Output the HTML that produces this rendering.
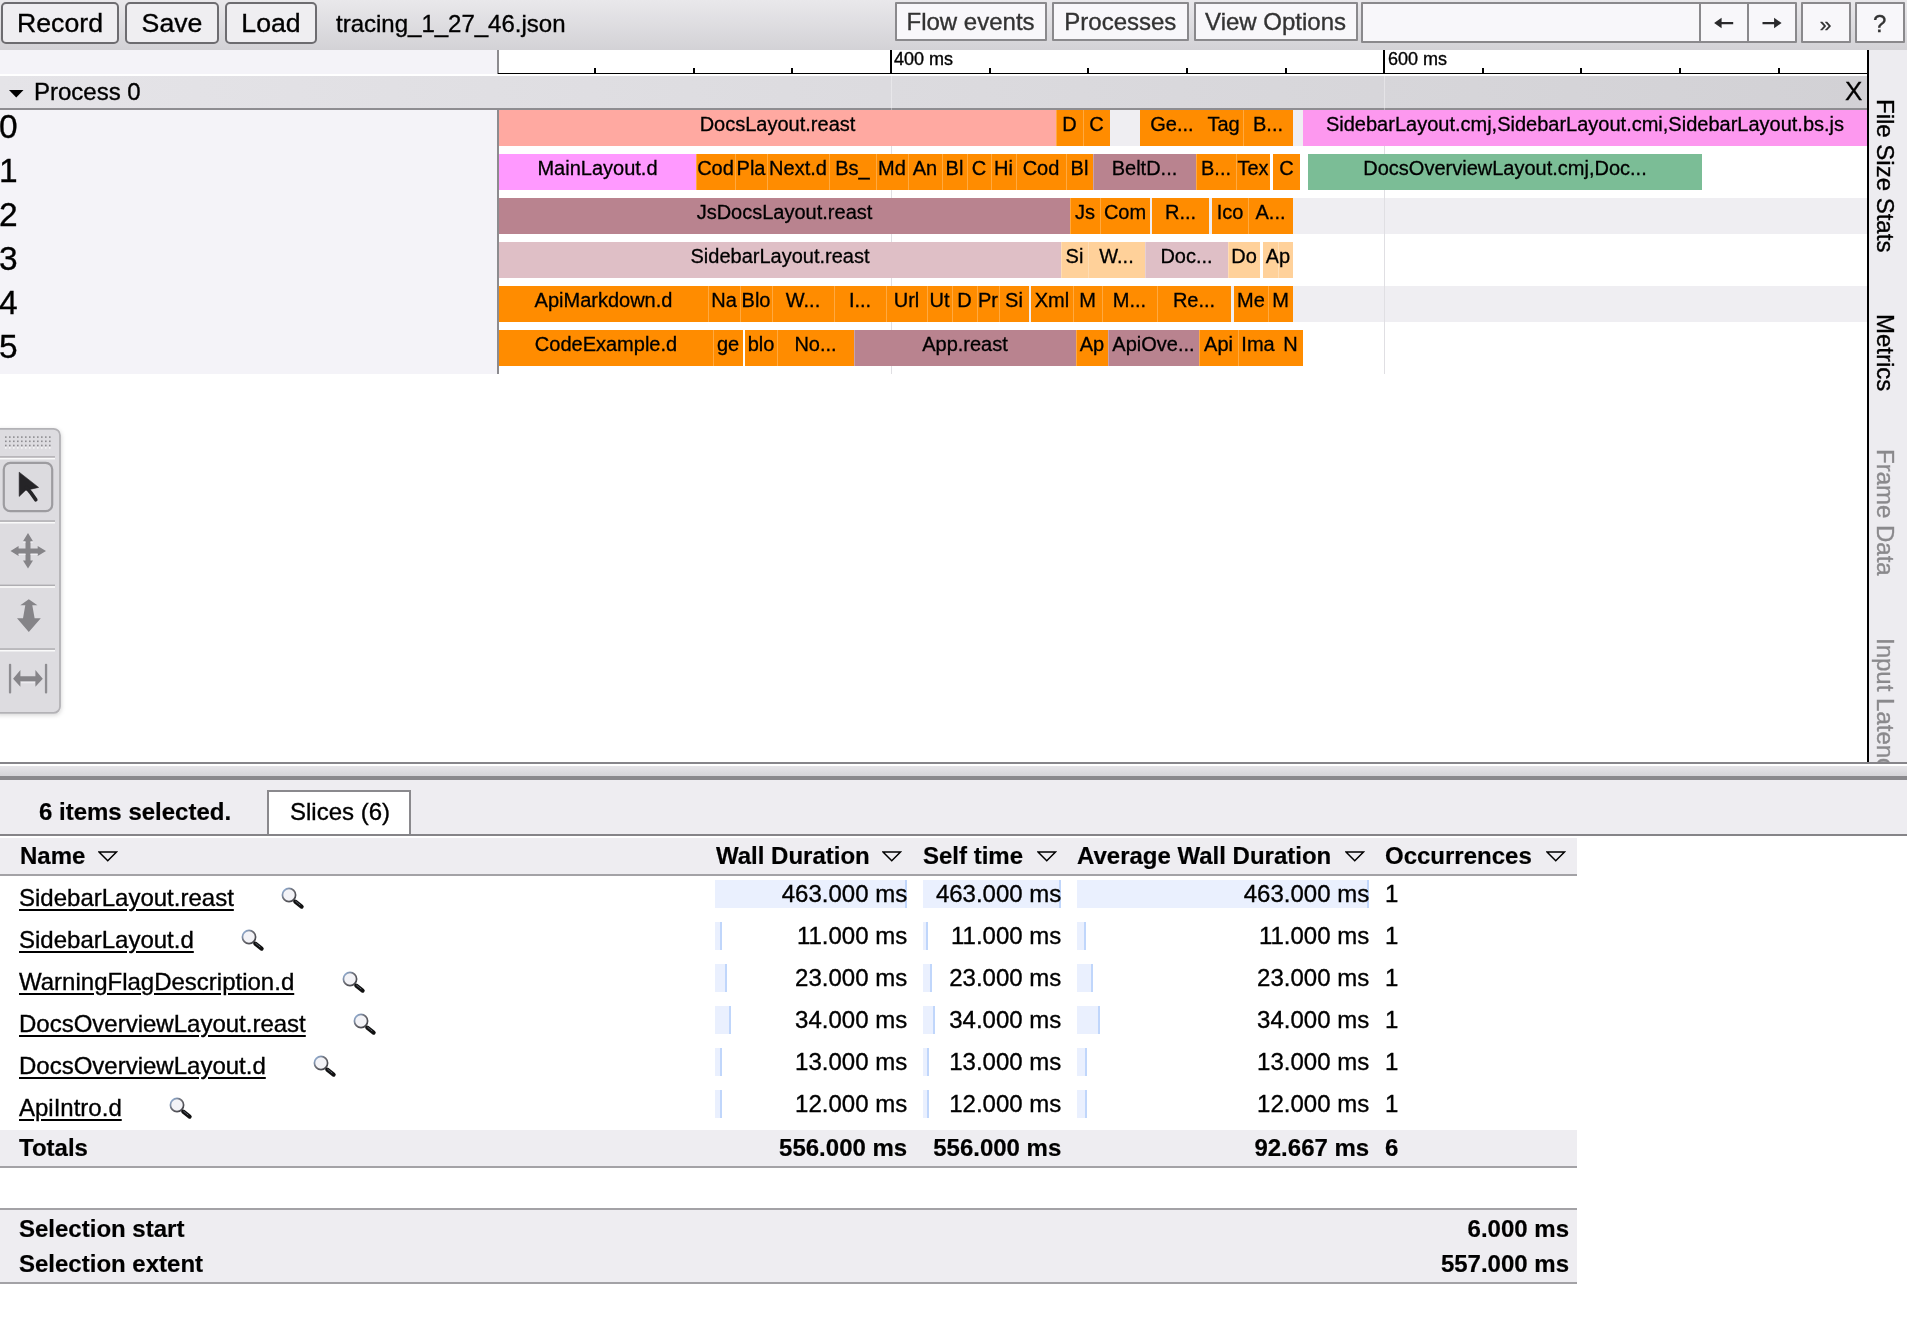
<!DOCTYPE html>
<html><head><meta charset="utf-8"><style>
html,body{margin:0;padding:0;}
body{width:1907px;height:1319px;overflow:hidden;position:relative;background:#fff;font-family:"Liberation Sans", sans-serif;color:#000;}
.a{position:absolute;box-sizing:border-box;}
.t{position:absolute;white-space:nowrap;line-height:1;will-change:transform;-webkit-text-stroke:0.35px currentColor;}
.t[style*="bold"]{-webkit-text-stroke:0.2px currentColor;}
.btn{position:absolute;box-sizing:border-box;border:2px solid #6d6c70;border-radius:5px;background:#efeef1;}
.tb{position:absolute;box-sizing:border-box;border:2px solid #8a898c;border-radius:1px;background:#f8f7fa;}
.sl{position:absolute;overflow:hidden;}
.sl span{will-change:transform;-webkit-text-stroke:0.3px #000;position:absolute;left:0;right:0;text-align:center;font-size:20px;line-height:20px;white-space:nowrap;}
</style></head><body>

<div class="a" style="left:0;top:0;width:1907px;height:50px;background:linear-gradient(#e9e8eb,#d3d2d6);"></div>
<div class="btn" style="left:1.0px;top:2px;width:118.0px;height:42px;"></div>
<div class="t" style="left:1.0px;top:6px;width:118.0px;text-align:center;font-size:26.67px;line-height:34px;">Record</div>
<div class="btn" style="left:125.0px;top:2px;width:94.0px;height:42px;"></div>
<div class="t" style="left:125.0px;top:6px;width:94.0px;text-align:center;font-size:26.67px;line-height:34px;">Save</div>
<div class="btn" style="left:225.0px;top:2px;width:92.0px;height:42px;"></div>
<div class="t" style="left:225.0px;top:6px;width:92.0px;text-align:center;font-size:26.67px;line-height:34px;">Load</div>
<div class="t" style="left:336px;top:8px;font-size:24px;line-height:32px;">tracing_1_27_46.json</div>
<div class="tb" style="left:895.4px;top:2.4px;width:152.1px;height:39.0px;"></div>
<div class="t" style="left:895.4px;top:2.4px;width:151.1px;text-align:center;font-size:24.0px;line-height:39.0px;color:#333;">Flow events</div>
<div class="tb" style="left:1051.6px;top:2.4px;width:137.7px;height:39.0px;"></div>
<div class="t" style="left:1051.6px;top:2.4px;width:136.7px;text-align:center;font-size:24.0px;line-height:39.0px;color:#333;">Processes</div>
<div class="tb" style="left:1193.5px;top:2.4px;width:164.1px;height:39.0px;"></div>
<div class="t" style="left:1193.5px;top:2.4px;width:163.1px;text-align:center;font-size:24.0px;line-height:39.0px;color:#333;">View Options</div>
<div class="tb" style="left:1361.4px;top:2.3px;width:339.4px;height:40.9px;"></div>
<div class="tb" style="left:1699.1px;top:2.3px;width:49.8px;height:40.9px;"></div>
<div class="tb" style="left:1747.0px;top:2.3px;width:49.7px;height:40.9px;"></div>
<div class="tb" style="left:1801.3px;top:2.3px;width:50.1px;height:40.9px;"></div>
<div class="tb" style="left:1855.2px;top:2.3px;width:50.3px;height:40.9px;"></div>
<svg class="a" style="left:1700px;top:0;" width="100" height="45" viewBox="1700 0 100 45"><path d="M1714.1,23 L1721.6,17.8 L1721.6,21.9 L1733.2,21.9 L1733.2,24.3 L1721.6,24.3 L1721.6,28.2 Z" fill="#2a2a2c"/><path d="M1781.6,23 L1774.1,17.8 L1774.1,21.9 L1762.5,21.9 L1762.5,24.3 L1774.1,24.3 L1774.1,28.2 Z" fill="#2a2a2c"/></svg>
<div class="t" style="left:1801.3px;top:12px;width:49.1px;text-align:center;font-size:21px;line-height:24px;color:#333;">&#187;</div>
<div class="t" style="left:1855.2px;top:4px;width:49.3px;text-align:center;font-size:24px;line-height:40px;color:#333;">?</div>
<div class="a" style="left:0;top:50px;width:498px;height:23.5px;background:#f4f3f8;"></div>
<div class="a" style="left:498px;top:50px;width:1369px;height:23.5px;background:#fff;"></div>
<div class="a" style="left:497px;top:50px;width:1.6px;height:23.5px;background:#8c8b8f;"></div>
<div class="a" style="left:498px;top:72.5px;width:1369px;height:1.6px;background:#000;"></div>
<div class="a" style="left:593.95px;top:68px;width:2px;height:5px;background:#000;"></div>
<div class="a" style="left:692.60px;top:68px;width:2px;height:5px;background:#000;"></div>
<div class="a" style="left:791.25px;top:68px;width:2px;height:5px;background:#000;"></div>
<div class="a" style="left:889.90px;top:50px;width:2px;height:23px;background:#000;"></div>
<div class="a" style="left:988.55px;top:68px;width:2px;height:5px;background:#000;"></div>
<div class="a" style="left:1087.20px;top:68px;width:2px;height:5px;background:#000;"></div>
<div class="a" style="left:1185.85px;top:68px;width:2px;height:5px;background:#000;"></div>
<div class="a" style="left:1284.50px;top:68px;width:2px;height:5px;background:#000;"></div>
<div class="a" style="left:1383.15px;top:50px;width:2px;height:23px;background:#000;"></div>
<div class="a" style="left:1481.80px;top:68px;width:2px;height:5px;background:#000;"></div>
<div class="a" style="left:1580.45px;top:68px;width:2px;height:5px;background:#000;"></div>
<div class="a" style="left:1679.10px;top:68px;width:2px;height:5px;background:#000;"></div>
<div class="a" style="left:1777.75px;top:68px;width:2px;height:5px;background:#000;"></div>
<div class="t" style="left:894px;top:50px;font-size:18px;line-height:18px;">400 ms</div>
<div class="t" style="left:1388px;top:50px;font-size:18px;line-height:18px;">600 ms</div>
<div class="a" style="left:0;top:73.5px;width:1867px;height:2.5px;background:#fff;"></div>
<div class="a" style="left:0;top:76px;width:1867px;height:34px;background:linear-gradient(to right,#e5e4e8,#d2d1d5);border-bottom:2px solid #8e8d91;"></div>
<svg class="a" style="left:9px;top:89.6px;" width="15" height="8"><polygon points="0,0 14.5,0 7.25,7.5" fill="#000"/></svg>
<div class="t" style="left:34px;top:78px;font-size:24px;line-height:28px;">Process 0</div>
<div class="t" style="left:1844.5px;top:77px;font-size:26px;line-height:28px;-webkit-text-stroke:0.3px #000;">X</div>
<div class="a" style="left:0;top:110px;width:498px;height:264px;background:#f4f3f8;"></div>
<div class="a" style="left:497px;top:110px;width:1.6px;height:264px;background:#8c8b8f;"></div>
<div class="a" style="left:498.6px;top:110px;width:1368.4px;height:36px;background:#efeef2;"></div>
<div class="t" style="left:-1px;top:110.4px;font-size:33.5px;line-height:33.5px;">0</div>
<div class="t" style="left:-1px;top:154.4px;font-size:33.5px;line-height:33.5px;">1</div>
<div class="a" style="left:498.6px;top:198px;width:1368.4px;height:36px;background:#efeef2;"></div>
<div class="t" style="left:-1px;top:198.4px;font-size:33.5px;line-height:33.5px;">2</div>
<div class="t" style="left:-1px;top:242.4px;font-size:33.5px;line-height:33.5px;">3</div>
<div class="a" style="left:498.6px;top:286px;width:1368.4px;height:36px;background:#efeef2;"></div>
<div class="t" style="left:-1px;top:286.4px;font-size:33.5px;line-height:33.5px;">4</div>
<div class="t" style="left:-1px;top:330.4px;font-size:33.5px;line-height:33.5px;">5</div>
<div class="a" style="left:891px;top:110px;width:1px;height:264px;background:#e0dfe3;"></div>
<div class="a" style="left:891px;top:76px;width:1px;height:34px;background:rgba(255,255,255,0.35);"></div>
<div class="a" style="left:1384px;top:110px;width:1px;height:264px;background:#e0dfe3;"></div>
<div class="a" style="left:1384px;top:76px;width:1px;height:34px;background:rgba(255,255,255,0.35);"></div>
<div class="sl" style="left:499.0px;top:110px;width:557.0px;height:36px;background:#ffa9a1;"><span style="top:3.9px;">DocsLayout.reast</span></div>
<div class="sl" style="left:1056.0px;top:110px;width:27.0px;height:36px;background:#ff8c00;"><span style="top:3.9px;">D</span></div>
<div class="sl" style="left:1083.0px;top:110px;width:27.0px;height:36px;background:#ff8c00;"><span style="top:3.9px;">C</span></div>
<div class="sl" style="left:1140.0px;top:110px;width:64.0px;height:36px;background:#ff8c00;"><span style="top:3.9px;">Ge...</span></div>
<div class="sl" style="left:1204.0px;top:110px;width:39.0px;height:36px;background:#ff8c00;"><span style="top:3.9px;">Tag</span></div>
<div class="sl" style="left:1243.0px;top:110px;width:50.0px;height:36px;background:#ff8c00;"><span style="top:3.9px;">B...</span></div>
<div class="sl" style="left:1303.0px;top:110px;width:564.0px;height:36px;background:#fd98ef;"><span style="top:3.9px;">SidebarLayout.cmj,SidebarLayout.cmi,SidebarLayout.bs.js</span></div>
<div class="a" style="left:1056px;top:110px;width:1px;height:36px;background:rgba(255,255,255,0.25);"></div>
<div class="a" style="left:1083px;top:110px;width:1px;height:36px;background:rgba(255,255,255,0.25);"></div>
<div class="a" style="left:1243px;top:110px;width:1px;height:36px;background:rgba(255,255,255,0.25);"></div>
<div class="sl" style="left:499.0px;top:154px;width:197.0px;height:36px;background:#ff99ff;"><span style="top:3.9px;">MainLayout.d</span></div>
<div class="sl" style="left:696.0px;top:154px;width:39.0px;height:36px;background:#ff8c00;"><span style="top:3.9px;">Cod</span></div>
<div class="sl" style="left:735.0px;top:154px;width:32.0px;height:36px;background:#ff8c00;"><span style="top:3.9px;">Pla</span></div>
<div class="sl" style="left:767.0px;top:154px;width:62.0px;height:36px;background:#ff8c00;"><span style="top:3.9px;">Next.d</span></div>
<div class="sl" style="left:829.0px;top:154px;width:47.0px;height:36px;background:#ff8c00;"><span style="top:3.9px;">Bs_</span></div>
<div class="sl" style="left:876.0px;top:154px;width:32.0px;height:36px;background:#ff8c00;"><span style="top:3.9px;">Md</span></div>
<div class="sl" style="left:908.0px;top:154px;width:34.0px;height:36px;background:#ff8c00;"><span style="top:3.9px;">An</span></div>
<div class="sl" style="left:942.0px;top:154px;width:25.0px;height:36px;background:#ff8c00;"><span style="top:3.9px;">Bl</span></div>
<div class="sl" style="left:967.0px;top:154px;width:24.0px;height:36px;background:#ff8c00;"><span style="top:3.9px;">C</span></div>
<div class="sl" style="left:991.0px;top:154px;width:25.0px;height:36px;background:#ff8c00;"><span style="top:3.9px;">Hi</span></div>
<div class="sl" style="left:1016.0px;top:154px;width:50.0px;height:36px;background:#ff8c00;"><span style="top:3.9px;">Cod</span></div>
<div class="sl" style="left:1066.0px;top:154px;width:27.0px;height:36px;background:#ff8c00;"><span style="top:3.9px;">Bl</span></div>
<div class="sl" style="left:1093.0px;top:154px;width:103.0px;height:36px;background:#b9838f;"><span style="top:3.9px;">BeltD...</span></div>
<div class="sl" style="left:1196.0px;top:154px;width:40.0px;height:36px;background:#ff8c00;"><span style="top:3.9px;">B...</span></div>
<div class="sl" style="left:1236.0px;top:154px;width:34.0px;height:36px;background:#ff8c00;"><span style="top:3.9px;">Tex</span></div>
<div class="sl" style="left:1273.0px;top:154px;width:27.0px;height:36px;background:#ff8c00;"><span style="top:3.9px;">C</span></div>
<div class="sl" style="left:1308.0px;top:154px;width:394.0px;height:36px;background:#7bbd96;"><span style="top:3.9px;">DocsOverviewLayout.cmj,Doc...</span></div>
<div class="a" style="left:696px;top:154px;width:1px;height:36px;background:rgba(255,255,255,0.25);"></div>
<div class="a" style="left:735px;top:154px;width:1px;height:36px;background:rgba(255,255,255,0.25);"></div>
<div class="a" style="left:767px;top:154px;width:1px;height:36px;background:rgba(255,255,255,0.25);"></div>
<div class="a" style="left:829px;top:154px;width:1px;height:36px;background:rgba(255,255,255,0.25);"></div>
<div class="a" style="left:876px;top:154px;width:1px;height:36px;background:rgba(255,255,255,0.25);"></div>
<div class="a" style="left:908px;top:154px;width:1px;height:36px;background:rgba(255,255,255,0.25);"></div>
<div class="a" style="left:942px;top:154px;width:1px;height:36px;background:rgba(255,255,255,0.25);"></div>
<div class="a" style="left:967px;top:154px;width:1px;height:36px;background:rgba(255,255,255,0.25);"></div>
<div class="a" style="left:991px;top:154px;width:1px;height:36px;background:rgba(255,255,255,0.25);"></div>
<div class="a" style="left:1016px;top:154px;width:1px;height:36px;background:rgba(255,255,255,0.25);"></div>
<div class="a" style="left:1066px;top:154px;width:1px;height:36px;background:rgba(255,255,255,0.25);"></div>
<div class="a" style="left:1093px;top:154px;width:1px;height:36px;background:rgba(255,255,255,0.25);"></div>
<div class="a" style="left:1196px;top:154px;width:1px;height:36px;background:rgba(255,255,255,0.25);"></div>
<div class="a" style="left:1236px;top:154px;width:1px;height:36px;background:rgba(255,255,255,0.25);"></div>
<div class="sl" style="left:499.0px;top:198px;width:571.0px;height:36px;background:#b9838f;"><span style="top:3.9px;">JsDocsLayout.reast</span></div>
<div class="sl" style="left:1070.0px;top:198px;width:30.0px;height:36px;background:#ff8c00;"><span style="top:3.9px;">Js</span></div>
<div class="sl" style="left:1100.0px;top:198px;width:50.0px;height:36px;background:#ff8c00;"><span style="top:3.9px;">Com</span></div>
<div class="sl" style="left:1152.0px;top:198px;width:57.0px;height:36px;background:#ff8c00;"><span style="top:3.9px;">R...</span></div>
<div class="sl" style="left:1212.0px;top:198px;width:36.0px;height:36px;background:#ff8c00;"><span style="top:3.9px;">Ico</span></div>
<div class="sl" style="left:1248.0px;top:198px;width:45.0px;height:36px;background:#ff8c00;"><span style="top:3.9px;">A...</span></div>
<div class="a" style="left:1070px;top:198px;width:1px;height:36px;background:rgba(255,255,255,0.25);"></div>
<div class="a" style="left:1100px;top:198px;width:1px;height:36px;background:rgba(255,255,255,0.25);"></div>
<div class="a" style="left:1248px;top:198px;width:1px;height:36px;background:rgba(255,255,255,0.25);"></div>
<div class="sl" style="left:499.0px;top:242px;width:562.0px;height:36px;background:#dfbfc6;"><span style="top:3.9px;">SidebarLayout.reast</span></div>
<div class="sl" style="left:1061.0px;top:242px;width:27.0px;height:36px;background:#ffd19a;"><span style="top:3.9px;">Si</span></div>
<div class="sl" style="left:1088.0px;top:242px;width:57.0px;height:36px;background:#ffd19a;"><span style="top:3.9px;">W...</span></div>
<div class="sl" style="left:1145.0px;top:242px;width:83.0px;height:36px;background:#dfbfc6;"><span style="top:3.9px;">Doc...</span></div>
<div class="sl" style="left:1228.0px;top:242px;width:32.0px;height:36px;background:#ffd19a;"><span style="top:3.9px;">Do</span></div>
<div class="sl" style="left:1263.0px;top:242px;width:30.0px;height:36px;background:#ffd19a;"><span style="top:3.9px;">Ap</span></div>
<div class="a" style="left:1061px;top:242px;width:1px;height:36px;background:rgba(255,255,255,0.25);"></div>
<div class="a" style="left:1088px;top:242px;width:1px;height:36px;background:rgba(255,255,255,0.25);"></div>
<div class="a" style="left:1145px;top:242px;width:1px;height:36px;background:rgba(255,255,255,0.25);"></div>
<div class="a" style="left:1228px;top:242px;width:1px;height:36px;background:rgba(255,255,255,0.25);"></div>
<div class="sl" style="left:499.0px;top:286px;width:209.0px;height:36px;background:#ff8c00;"><span style="top:3.9px;">ApiMarkdown.d</span></div>
<div class="sl" style="left:708.0px;top:286px;width:32.0px;height:36px;background:#ff8c00;"><span style="top:3.9px;">Na</span></div>
<div class="sl" style="left:740.0px;top:286px;width:32.0px;height:36px;background:#ff8c00;"><span style="top:3.9px;">Blo</span></div>
<div class="sl" style="left:772.0px;top:286px;width:62.0px;height:36px;background:#ff8c00;"><span style="top:3.9px;">W...</span></div>
<div class="sl" style="left:834.0px;top:286px;width:52.0px;height:36px;background:#ff8c00;"><span style="top:3.9px;">I...</span></div>
<div class="sl" style="left:886.0px;top:286px;width:41.0px;height:36px;background:#ff8c00;"><span style="top:3.9px;">Url</span></div>
<div class="sl" style="left:927.0px;top:286px;width:25.0px;height:36px;background:#ff8c00;"><span style="top:3.9px;">Ut</span></div>
<div class="sl" style="left:952.0px;top:286px;width:25.0px;height:36px;background:#ff8c00;"><span style="top:3.9px;">D</span></div>
<div class="sl" style="left:977.0px;top:286px;width:22.0px;height:36px;background:#ff8c00;"><span style="top:3.9px;">Pr</span></div>
<div class="sl" style="left:999.0px;top:286px;width:30.0px;height:36px;background:#ff8c00;"><span style="top:3.9px;">Si</span></div>
<div class="sl" style="left:1031.0px;top:286px;width:42.0px;height:36px;background:#ff8c00;"><span style="top:3.9px;">Xml</span></div>
<div class="sl" style="left:1073.0px;top:286px;width:29.0px;height:36px;background:#ff8c00;"><span style="top:3.9px;">M</span></div>
<div class="sl" style="left:1102.0px;top:286px;width:55.0px;height:36px;background:#ff8c00;"><span style="top:3.9px;">M...</span></div>
<div class="sl" style="left:1157.0px;top:286px;width:74.0px;height:36px;background:#ff8c00;"><span style="top:3.9px;">Re...</span></div>
<div class="sl" style="left:1234.0px;top:286px;width:34.0px;height:36px;background:#ff8c00;"><span style="top:3.9px;">Me</span></div>
<div class="sl" style="left:1268.0px;top:286px;width:25.0px;height:36px;background:#ff8c00;"><span style="top:3.9px;">M</span></div>
<div class="a" style="left:708px;top:286px;width:1px;height:36px;background:rgba(255,255,255,0.25);"></div>
<div class="a" style="left:740px;top:286px;width:1px;height:36px;background:rgba(255,255,255,0.25);"></div>
<div class="a" style="left:772px;top:286px;width:1px;height:36px;background:rgba(255,255,255,0.25);"></div>
<div class="a" style="left:834px;top:286px;width:1px;height:36px;background:rgba(255,255,255,0.25);"></div>
<div class="a" style="left:886px;top:286px;width:1px;height:36px;background:rgba(255,255,255,0.25);"></div>
<div class="a" style="left:927px;top:286px;width:1px;height:36px;background:rgba(255,255,255,0.25);"></div>
<div class="a" style="left:952px;top:286px;width:1px;height:36px;background:rgba(255,255,255,0.25);"></div>
<div class="a" style="left:977px;top:286px;width:1px;height:36px;background:rgba(255,255,255,0.25);"></div>
<div class="a" style="left:999px;top:286px;width:1px;height:36px;background:rgba(255,255,255,0.25);"></div>
<div class="a" style="left:1073px;top:286px;width:1px;height:36px;background:rgba(255,255,255,0.25);"></div>
<div class="a" style="left:1102px;top:286px;width:1px;height:36px;background:rgba(255,255,255,0.25);"></div>
<div class="a" style="left:1157px;top:286px;width:1px;height:36px;background:rgba(255,255,255,0.25);"></div>
<div class="a" style="left:1268px;top:286px;width:1px;height:36px;background:rgba(255,255,255,0.25);"></div>
<div class="sl" style="left:499.0px;top:330px;width:214.0px;height:36px;background:#ff8c00;"><span style="top:3.9px;">CodeExample.d</span></div>
<div class="sl" style="left:713.0px;top:330px;width:30.0px;height:36px;background:#ff8c00;"><span style="top:3.9px;">ge</span></div>
<div class="sl" style="left:745.0px;top:330px;width:32.0px;height:36px;background:#ff8c00;"><span style="top:3.9px;">blo</span></div>
<div class="sl" style="left:777.0px;top:330px;width:77.0px;height:36px;background:#ff8c00;"><span style="top:3.9px;">No...</span></div>
<div class="sl" style="left:854.0px;top:330px;width:222.0px;height:36px;background:#b9838f;"><span style="top:3.9px;">App.reast</span></div>
<div class="sl" style="left:1076.0px;top:330px;width:32.0px;height:36px;background:#ff8c00;"><span style="top:3.9px;">Ap</span></div>
<div class="sl" style="left:1108.0px;top:330px;width:91.0px;height:36px;background:#b9838f;"><span style="top:3.9px;">ApiOve...</span></div>
<div class="sl" style="left:1199.0px;top:330px;width:39.0px;height:36px;background:#ff8c00;"><span style="top:3.9px;">Api</span></div>
<div class="sl" style="left:1238.0px;top:330px;width:40.0px;height:36px;background:#ff8c00;"><span style="top:3.9px;">Ima</span></div>
<div class="sl" style="left:1278.0px;top:330px;width:25.0px;height:36px;background:#ff8c00;"><span style="top:3.9px;">N</span></div>
<div class="a" style="left:713px;top:330px;width:1px;height:36px;background:rgba(255,255,255,0.25);"></div>
<div class="a" style="left:777px;top:330px;width:1px;height:36px;background:rgba(255,255,255,0.25);"></div>
<div class="a" style="left:854px;top:330px;width:1px;height:36px;background:rgba(255,255,255,0.25);"></div>
<div class="a" style="left:1076px;top:330px;width:1px;height:36px;background:rgba(255,255,255,0.25);"></div>
<div class="a" style="left:1108px;top:330px;width:1px;height:36px;background:rgba(255,255,255,0.25);"></div>
<div class="a" style="left:1199px;top:330px;width:1px;height:36px;background:rgba(255,255,255,0.25);"></div>
<div class="a" style="left:1238px;top:330px;width:1px;height:36px;background:rgba(255,255,255,0.25);"></div>
<div class="a" style="left:1867px;top:50px;width:1.8px;height:712px;background:#000;"></div>
<div class="a" style="left:1278px;top:242px;width:1px;height:36px;background:rgba(255,255,255,0.3);"></div>
<div class="a" style="left:1868.8px;top:50px;width:38.2px;height:712px;background:#edecf0;"></div>
<div class="t" style="left:1872px;top:99px;font-size:24px;line-height:26px;writing-mode:vertical-rl;color:#000;">File Size Stats</div>
<div class="t" style="left:1872px;top:314px;font-size:24px;line-height:26px;writing-mode:vertical-rl;color:#000;">Metrics</div>
<div class="t" style="left:1872px;top:449px;font-size:24px;line-height:26px;writing-mode:vertical-rl;color:#8a898c;">Frame Data</div>
<div class="t" style="left:1872px;top:638px;font-size:24px;line-height:26px;writing-mode:vertical-rl;color:#8a898c;">Input Latency</div>
<svg class="a" style="left:0;top:420px;" width="72" height="310" viewBox="0 420 72 310"><defs><filter id="psh" x="-20%" y="-20%" width="140%" height="140%"><feDropShadow dx="0.5" dy="1.5" stdDeviation="2.2" flood-color="#000" flood-opacity="0.16"/></filter></defs><rect x="-8" y="428.8" width="68" height="284.1" rx="6.5" ry="6.5" fill="#dddce0" stroke="#b3b2b6" stroke-width="1.8" filter="url(#psh)"/><rect x="5.0" y="436.3" width="1.6" height="1.6" fill="#8e8d91"/><rect x="9.0" y="436.3" width="1.6" height="1.6" fill="#8e8d91"/><rect x="13.0" y="436.3" width="1.6" height="1.6" fill="#8e8d91"/><rect x="17.0" y="436.3" width="1.6" height="1.6" fill="#8e8d91"/><rect x="21.0" y="436.3" width="1.6" height="1.6" fill="#8e8d91"/><rect x="25.0" y="436.3" width="1.6" height="1.6" fill="#8e8d91"/><rect x="29.0" y="436.3" width="1.6" height="1.6" fill="#8e8d91"/><rect x="33.0" y="436.3" width="1.6" height="1.6" fill="#8e8d91"/><rect x="37.0" y="436.3" width="1.6" height="1.6" fill="#8e8d91"/><rect x="41.0" y="436.3" width="1.6" height="1.6" fill="#8e8d91"/><rect x="45.0" y="436.3" width="1.6" height="1.6" fill="#8e8d91"/><rect x="49.0" y="436.3" width="1.6" height="1.6" fill="#8e8d91"/><rect x="5.0" y="440.5" width="1.6" height="1.6" fill="#8e8d91"/><rect x="9.0" y="440.5" width="1.6" height="1.6" fill="#8e8d91"/><rect x="13.0" y="440.5" width="1.6" height="1.6" fill="#8e8d91"/><rect x="17.0" y="440.5" width="1.6" height="1.6" fill="#8e8d91"/><rect x="21.0" y="440.5" width="1.6" height="1.6" fill="#8e8d91"/><rect x="25.0" y="440.5" width="1.6" height="1.6" fill="#8e8d91"/><rect x="29.0" y="440.5" width="1.6" height="1.6" fill="#8e8d91"/><rect x="33.0" y="440.5" width="1.6" height="1.6" fill="#8e8d91"/><rect x="37.0" y="440.5" width="1.6" height="1.6" fill="#8e8d91"/><rect x="41.0" y="440.5" width="1.6" height="1.6" fill="#8e8d91"/><rect x="45.0" y="440.5" width="1.6" height="1.6" fill="#8e8d91"/><rect x="49.0" y="440.5" width="1.6" height="1.6" fill="#8e8d91"/><rect x="5.0" y="444.7" width="1.6" height="1.6" fill="#8e8d91"/><rect x="9.0" y="444.7" width="1.6" height="1.6" fill="#8e8d91"/><rect x="13.0" y="444.7" width="1.6" height="1.6" fill="#8e8d91"/><rect x="17.0" y="444.7" width="1.6" height="1.6" fill="#8e8d91"/><rect x="21.0" y="444.7" width="1.6" height="1.6" fill="#8e8d91"/><rect x="25.0" y="444.7" width="1.6" height="1.6" fill="#8e8d91"/><rect x="29.0" y="444.7" width="1.6" height="1.6" fill="#8e8d91"/><rect x="33.0" y="444.7" width="1.6" height="1.6" fill="#8e8d91"/><rect x="37.0" y="444.7" width="1.6" height="1.6" fill="#8e8d91"/><rect x="41.0" y="444.7" width="1.6" height="1.6" fill="#8e8d91"/><rect x="45.0" y="444.7" width="1.6" height="1.6" fill="#8e8d91"/><rect x="49.0" y="444.7" width="1.6" height="1.6" fill="#8e8d91"/><rect x="5.0" y="447.3" width="1.6" height="1.2" fill="#fff"/><rect x="9.0" y="447.3" width="1.6" height="1.2" fill="#fff"/><rect x="13.0" y="447.3" width="1.6" height="1.2" fill="#fff"/><rect x="17.0" y="447.3" width="1.6" height="1.2" fill="#fff"/><rect x="21.0" y="447.3" width="1.6" height="1.2" fill="#fff"/><rect x="25.0" y="447.3" width="1.6" height="1.2" fill="#fff"/><rect x="29.0" y="447.3" width="1.6" height="1.2" fill="#fff"/><rect x="33.0" y="447.3" width="1.6" height="1.2" fill="#fff"/><rect x="37.0" y="447.3" width="1.6" height="1.2" fill="#fff"/><rect x="41.0" y="447.3" width="1.6" height="1.2" fill="#fff"/><rect x="45.0" y="447.3" width="1.6" height="1.2" fill="#fff"/><rect x="49.0" y="447.3" width="1.6" height="1.2" fill="#fff"/><rect x="0" y="456.2" width="55" height="1.6" fill="#aeadb1"/><rect x="0" y="457.8" width="55" height="1.6" fill="#fafafa"/><rect x="0" y="520.3" width="55" height="1.6" fill="#aeadb1"/><rect x="0" y="521.9" width="55" height="1.6" fill="#fafafa"/><rect x="0" y="584.6" width="55" height="1.6" fill="#aeadb1"/><rect x="0" y="586.2" width="55" height="1.6" fill="#fafafa"/><rect x="0" y="648.3" width="55" height="1.6" fill="#aeadb1"/><rect x="0" y="649.9" width="55" height="1.6" fill="#fafafa"/><rect x="3.8" y="462.8" width="48.4" height="48.4" rx="6.5" ry="6.5" fill="#dcdbdf" stroke="#9d9ca0" stroke-width="2.2"/><path d="M19.2,472.2 L19.2,496.4 L25.4,490.4 L38.6,487.4 Z" fill="#252427" stroke="#252427" stroke-width="0.6" stroke-linejoin="round"/><path d="M26.5,487.5 Q31.5,493 35.8,499.8" stroke="#252427" stroke-width="3.6" stroke-linecap="round" fill="none"/><path d="M28,533 L33,541.3 L30.5,541.3 L30.5,548.5 L37.7,548.5 L37.7,546 L46,551 L37.7,556 L37.7,553.5 L30.5,553.5 L30.5,560.4 L33,560.4 L28,568.5 L23,560.4 L25.5,560.4 L25.5,553.5 L18.6,553.5 L18.6,556 L10.5,551 L18.6,546 L18.6,548.5 L25.5,548.5 L25.5,541.3 L23,541.3 Z" fill="#858488"/><path d="M30.5,554.4 L37.7,554.4 M18.6,554.4 L25.5,554.4 M25.5,542.2 L23,542.2 M30.5,542.2 L33,542.2" stroke="#f0eff3" stroke-width="1" fill="none"/><path d="M28.8,599.2 L37.4,605.2 L32.3,605.2 L34.6,618.2 L40.8,618.2 L28.8,632 L17,618.2 L23,618.2 L25.3,605.2 L20.3,605.2 Z" fill="#858488"/><rect x="8.9" y="663.8" width="2.3" height="29.7" rx="1" fill="#8e8d91"/><rect x="44.9" y="663.8" width="2.3" height="29.7" rx="1" fill="#8e8d91"/><path d="M13.1,678.8 L20.4,670 L20.4,676.2 L35.4,676.2 L35.4,670 L42.8,678.8 L35.4,686.8 L35.4,681.3 L20.4,681.3 L20.4,686.8 Z" fill="#858488"/><rect x="21" y="682.2" width="14" height="1" fill="#f0eff3"/></svg>
<div class="a" style="left:0;top:762px;width:1907px;height:18px;background:linear-gradient(#e9e8ec,#d5d4d8);border-top:2px solid #86858a;border-bottom:4px solid #8a898d;box-shadow:inset 0 2px 0 #fff;"></div>
<div class="a" style="left:0;top:779.5px;width:1907px;height:54.5px;background:#eeedf1;"></div>
<div class="t" style="left:39px;top:798px;font-size:24px;line-height:28px;font-weight:bold;">6 items selected.</div>
<div class="a" style="left:267px;top:790px;width:144px;height:44px;background:#fff;border:2px solid #8a898d;border-bottom:none;"></div>
<div class="t" style="left:289.5px;top:797.5px;font-size:24px;line-height:28px;">Slices (6)</div>
<div class="a" style="left:0;top:834px;width:1907px;height:2px;background:#858488;"></div>
<div class="a" style="left:0;top:838px;width:1577px;height:38px;background:#eeedf1;border-bottom:2px solid #a3a2a6;"></div>
<div class="t" style="left:19.5px;top:842px;font-size:24px;line-height:28px;font-weight:bold;">Name</div>
<svg class="a" style="left:98.0px;top:850.5px;" width="20" height="11"><polygon points="1,1 18.5,1 9.75,9.8" fill="none" stroke="#000" stroke-width="1.5"/></svg>
<div class="t" style="left:715.5px;top:842px;font-size:24px;line-height:28px;font-weight:bold;">Wall Duration</div>
<svg class="a" style="left:882.4px;top:850.5px;" width="20" height="11"><polygon points="1,1 18.5,1 9.75,9.8" fill="none" stroke="#000" stroke-width="1.5"/></svg>
<div class="t" style="left:923.0px;top:842px;font-size:24px;line-height:28px;font-weight:bold;">Self time</div>
<svg class="a" style="left:1037.1px;top:850.5px;" width="20" height="11"><polygon points="1,1 18.5,1 9.75,9.8" fill="none" stroke="#000" stroke-width="1.5"/></svg>
<div class="t" style="left:1077.0px;top:842px;font-size:24px;line-height:28px;font-weight:bold;">Average Wall Duration</div>
<svg class="a" style="left:1345.1px;top:850.5px;" width="20" height="11"><polygon points="1,1 18.5,1 9.75,9.8" fill="none" stroke="#000" stroke-width="1.5"/></svg>
<div class="t" style="left:1385.0px;top:842px;font-size:24px;line-height:28px;font-weight:bold;">Occurrences</div>
<svg class="a" style="left:1545.6px;top:850.5px;" width="20" height="11"><polygon points="1,1 18.5,1 9.75,9.8" fill="none" stroke="#000" stroke-width="1.5"/></svg>
<div class="t" style="left:19px;top:884px;font-size:24px;line-height:28px;"><span style="text-decoration:underline;text-underline-offset:3px;">SidebarLayout.reast</span><svg style="position:relative;top:-0.5px;margin-left:46.4px;vertical-align:middle;" width="26" height="26" viewBox="0 0 26 26"><defs><linearGradient id="lg0" x1="0" y1="0" x2="1" y2="1"><stop offset="0" stop-color="#9cc0ee"/><stop offset="0.45" stop-color="#6a6a70"/><stop offset="1" stop-color="#3a3a40"/></linearGradient></defs><circle cx="9" cy="9" r="6.6" fill="#f3f3f7" stroke="url(#lg0)" stroke-width="1.7"/><line x1="15.3" y1="15.6" x2="21.6" y2="20.6" stroke="#111" stroke-width="4.2" stroke-linecap="round"/><line x1="15.8" y1="15.4" x2="20.6" y2="19.3" stroke="#6a7080" stroke-width="1" stroke-linecap="round" stroke-dasharray="1 1.2"/></svg></div>
<div class="a" style="left:715.2px;top:880px;width:191.7px;height:28px;background:#eaf0fe;border-right:2px solid #c0d6fb;"></div>
<div class="t" style="left:715.2px;top:880px;width:192.2px;text-align:right;font-size:24px;line-height:28px;">463.000 ms</div>
<div class="a" style="left:923.0px;top:880px;width:137.8px;height:28px;background:#eaf0fe;border-right:2px solid #c0d6fb;"></div>
<div class="t" style="left:923.0px;top:880px;width:138.3px;text-align:right;font-size:24px;line-height:28px;">463.000 ms</div>
<div class="a" style="left:1077.0px;top:880px;width:291.7px;height:28px;background:#eaf0fe;border-right:2px solid #c0d6fb;"></div>
<div class="t" style="left:1077.0px;top:880px;width:292.2px;text-align:right;font-size:24px;line-height:28px;">463.000 ms</div>
<div class="t" style="left:1385px;top:880px;font-size:24px;line-height:28px;">1</div>
<div class="t" style="left:19px;top:926px;font-size:24px;line-height:28px;"><span style="text-decoration:underline;text-underline-offset:3px;">SidebarLayout.d</span><svg style="position:relative;top:-0.5px;margin-left:46.4px;vertical-align:middle;" width="26" height="26" viewBox="0 0 26 26"><defs><linearGradient id="lg1" x1="0" y1="0" x2="1" y2="1"><stop offset="0" stop-color="#9cc0ee"/><stop offset="0.45" stop-color="#6a6a70"/><stop offset="1" stop-color="#3a3a40"/></linearGradient></defs><circle cx="9" cy="9" r="6.6" fill="#f3f3f7" stroke="url(#lg1)" stroke-width="1.7"/><line x1="15.3" y1="15.6" x2="21.6" y2="20.6" stroke="#111" stroke-width="4.2" stroke-linecap="round"/><line x1="15.8" y1="15.4" x2="20.6" y2="19.3" stroke="#6a7080" stroke-width="1" stroke-linecap="round" stroke-dasharray="1 1.2"/></svg></div>
<div class="a" style="left:715.2px;top:922px;width:6.5px;height:28px;background:#eaf0fe;border-right:2px solid #c0d6fb;"></div>
<div class="t" style="left:715.2px;top:922px;width:192.2px;text-align:right;font-size:24px;line-height:28px;">11.000 ms</div>
<div class="a" style="left:923.0px;top:922px;width:5.2px;height:28px;background:#eaf0fe;border-right:2px solid #c0d6fb;"></div>
<div class="t" style="left:923.0px;top:922px;width:138.3px;text-align:right;font-size:24px;line-height:28px;">11.000 ms</div>
<div class="a" style="left:1077.0px;top:922px;width:8.9px;height:28px;background:#eaf0fe;border-right:2px solid #c0d6fb;"></div>
<div class="t" style="left:1077.0px;top:922px;width:292.2px;text-align:right;font-size:24px;line-height:28px;">11.000 ms</div>
<div class="t" style="left:1385px;top:922px;font-size:24px;line-height:28px;">1</div>
<div class="t" style="left:19px;top:968px;font-size:24px;line-height:28px;"><span style="text-decoration:underline;text-underline-offset:3px;">WarningFlagDescription.d</span><svg style="position:relative;top:-0.5px;margin-left:46.4px;vertical-align:middle;" width="26" height="26" viewBox="0 0 26 26"><defs><linearGradient id="lg2" x1="0" y1="0" x2="1" y2="1"><stop offset="0" stop-color="#9cc0ee"/><stop offset="0.45" stop-color="#6a6a70"/><stop offset="1" stop-color="#3a3a40"/></linearGradient></defs><circle cx="9" cy="9" r="6.6" fill="#f3f3f7" stroke="url(#lg2)" stroke-width="1.7"/><line x1="15.3" y1="15.6" x2="21.6" y2="20.6" stroke="#111" stroke-width="4.2" stroke-linecap="round"/><line x1="15.8" y1="15.4" x2="20.6" y2="19.3" stroke="#6a7080" stroke-width="1" stroke-linecap="round" stroke-dasharray="1 1.2"/></svg></div>
<div class="a" style="left:715.2px;top:964px;width:11.4px;height:28px;background:#eaf0fe;border-right:2px solid #c0d6fb;"></div>
<div class="t" style="left:715.2px;top:964px;width:192.2px;text-align:right;font-size:24px;line-height:28px;">23.000 ms</div>
<div class="a" style="left:923.0px;top:964px;width:8.7px;height:28px;background:#eaf0fe;border-right:2px solid #c0d6fb;"></div>
<div class="t" style="left:923.0px;top:964px;width:138.3px;text-align:right;font-size:24px;line-height:28px;">23.000 ms</div>
<div class="a" style="left:1077.0px;top:964px;width:16.4px;height:28px;background:#eaf0fe;border-right:2px solid #c0d6fb;"></div>
<div class="t" style="left:1077.0px;top:964px;width:292.2px;text-align:right;font-size:24px;line-height:28px;">23.000 ms</div>
<div class="t" style="left:1385px;top:964px;font-size:24px;line-height:28px;">1</div>
<div class="t" style="left:19px;top:1010px;font-size:24px;line-height:28px;"><span style="text-decoration:underline;text-underline-offset:3px;">DocsOverviewLayout.reast</span><svg style="position:relative;top:-0.5px;margin-left:46.4px;vertical-align:middle;" width="26" height="26" viewBox="0 0 26 26"><defs><linearGradient id="lg3" x1="0" y1="0" x2="1" y2="1"><stop offset="0" stop-color="#9cc0ee"/><stop offset="0.45" stop-color="#6a6a70"/><stop offset="1" stop-color="#3a3a40"/></linearGradient></defs><circle cx="9" cy="9" r="6.6" fill="#f3f3f7" stroke="url(#lg3)" stroke-width="1.7"/><line x1="15.3" y1="15.6" x2="21.6" y2="20.6" stroke="#111" stroke-width="4.2" stroke-linecap="round"/><line x1="15.8" y1="15.4" x2="20.6" y2="19.3" stroke="#6a7080" stroke-width="1" stroke-linecap="round" stroke-dasharray="1 1.2"/></svg></div>
<div class="a" style="left:715.2px;top:1006px;width:15.9px;height:28px;background:#eaf0fe;border-right:2px solid #c0d6fb;"></div>
<div class="t" style="left:715.2px;top:1006px;width:192.2px;text-align:right;font-size:24px;line-height:28px;">34.000 ms</div>
<div class="a" style="left:923.0px;top:1006px;width:12.0px;height:28px;background:#eaf0fe;border-right:2px solid #c0d6fb;"></div>
<div class="t" style="left:923.0px;top:1006px;width:138.3px;text-align:right;font-size:24px;line-height:28px;">34.000 ms</div>
<div class="a" style="left:1077.0px;top:1006px;width:23.3px;height:28px;background:#eaf0fe;border-right:2px solid #c0d6fb;"></div>
<div class="t" style="left:1077.0px;top:1006px;width:292.2px;text-align:right;font-size:24px;line-height:28px;">34.000 ms</div>
<div class="t" style="left:1385px;top:1006px;font-size:24px;line-height:28px;">1</div>
<div class="t" style="left:19px;top:1052px;font-size:24px;line-height:28px;"><span style="text-decoration:underline;text-underline-offset:3px;">DocsOverviewLayout.d</span><svg style="position:relative;top:-0.5px;margin-left:46.4px;vertical-align:middle;" width="26" height="26" viewBox="0 0 26 26"><defs><linearGradient id="lg4" x1="0" y1="0" x2="1" y2="1"><stop offset="0" stop-color="#9cc0ee"/><stop offset="0.45" stop-color="#6a6a70"/><stop offset="1" stop-color="#3a3a40"/></linearGradient></defs><circle cx="9" cy="9" r="6.6" fill="#f3f3f7" stroke="url(#lg4)" stroke-width="1.7"/><line x1="15.3" y1="15.6" x2="21.6" y2="20.6" stroke="#111" stroke-width="4.2" stroke-linecap="round"/><line x1="15.8" y1="15.4" x2="20.6" y2="19.3" stroke="#6a7080" stroke-width="1" stroke-linecap="round" stroke-dasharray="1 1.2"/></svg></div>
<div class="a" style="left:715.2px;top:1048px;width:7.3px;height:28px;background:#eaf0fe;border-right:2px solid #c0d6fb;"></div>
<div class="t" style="left:715.2px;top:1048px;width:192.2px;text-align:right;font-size:24px;line-height:28px;">13.000 ms</div>
<div class="a" style="left:923.0px;top:1048px;width:5.8px;height:28px;background:#eaf0fe;border-right:2px solid #c0d6fb;"></div>
<div class="t" style="left:923.0px;top:1048px;width:138.3px;text-align:right;font-size:24px;line-height:28px;">13.000 ms</div>
<div class="a" style="left:1077.0px;top:1048px;width:10.1px;height:28px;background:#eaf0fe;border-right:2px solid #c0d6fb;"></div>
<div class="t" style="left:1077.0px;top:1048px;width:292.2px;text-align:right;font-size:24px;line-height:28px;">13.000 ms</div>
<div class="t" style="left:1385px;top:1048px;font-size:24px;line-height:28px;">1</div>
<div class="t" style="left:19px;top:1094px;font-size:24px;line-height:28px;"><span style="text-decoration:underline;text-underline-offset:3px;">ApiIntro.d</span><svg style="position:relative;top:-0.5px;margin-left:46.4px;vertical-align:middle;" width="26" height="26" viewBox="0 0 26 26"><defs><linearGradient id="lg5" x1="0" y1="0" x2="1" y2="1"><stop offset="0" stop-color="#9cc0ee"/><stop offset="0.45" stop-color="#6a6a70"/><stop offset="1" stop-color="#3a3a40"/></linearGradient></defs><circle cx="9" cy="9" r="6.6" fill="#f3f3f7" stroke="url(#lg5)" stroke-width="1.7"/><line x1="15.3" y1="15.6" x2="21.6" y2="20.6" stroke="#111" stroke-width="4.2" stroke-linecap="round"/><line x1="15.8" y1="15.4" x2="20.6" y2="19.3" stroke="#6a7080" stroke-width="1" stroke-linecap="round" stroke-dasharray="1 1.2"/></svg></div>
<div class="a" style="left:715.2px;top:1090px;width:6.9px;height:28px;background:#eaf0fe;border-right:2px solid #c0d6fb;"></div>
<div class="t" style="left:715.2px;top:1090px;width:192.2px;text-align:right;font-size:24px;line-height:28px;">12.000 ms</div>
<div class="a" style="left:923.0px;top:1090px;width:5.5px;height:28px;background:#eaf0fe;border-right:2px solid #c0d6fb;"></div>
<div class="t" style="left:923.0px;top:1090px;width:138.3px;text-align:right;font-size:24px;line-height:28px;">12.000 ms</div>
<div class="a" style="left:1077.0px;top:1090px;width:9.5px;height:28px;background:#eaf0fe;border-right:2px solid #c0d6fb;"></div>
<div class="t" style="left:1077.0px;top:1090px;width:292.2px;text-align:right;font-size:24px;line-height:28px;">12.000 ms</div>
<div class="t" style="left:1385px;top:1090px;font-size:24px;line-height:28px;">1</div>
<div class="a" style="left:0;top:1130px;width:1577px;height:37.5px;background:#eeedf1;border-bottom:2px solid #a3a2a6;"></div>
<div class="t" style="left:19px;top:1134px;font-size:24px;line-height:28px;font-weight:bold;">Totals</div>
<div class="t" style="left:715.2px;top:1134px;width:192.2px;text-align:right;font-size:24px;line-height:28px;font-weight:bold;">556.000 ms</div>
<div class="t" style="left:923.0px;top:1134px;width:138.3px;text-align:right;font-size:24px;line-height:28px;font-weight:bold;">556.000 ms</div>
<div class="t" style="left:1077.0px;top:1134px;width:292.2px;text-align:right;font-size:24px;line-height:28px;font-weight:bold;">92.667 ms</div>
<div class="t" style="left:1385px;top:1134px;font-size:24px;line-height:28px;font-weight:bold;">6</div>
<div class="a" style="left:0;top:1208.3px;width:1577px;height:75.5px;background:#eeedf1;border-top:2px solid #a3a2a6;border-bottom:2px solid #a3a2a6;"></div>
<div class="t" style="left:19px;top:1214.5px;font-size:24px;line-height:28px;font-weight:bold;">Selection start</div>
<div class="t" style="left:19px;top:1250px;font-size:24px;line-height:28px;font-weight:bold;">Selection extent</div>
<div class="t" style="left:1200px;top:1214.5px;width:369px;text-align:right;font-size:24px;line-height:28px;font-weight:bold;">6.000 ms</div>
<div class="t" style="left:1200px;top:1250px;width:369px;text-align:right;font-size:24px;line-height:28px;font-weight:bold;">557.000 ms</div>
</body></html>
